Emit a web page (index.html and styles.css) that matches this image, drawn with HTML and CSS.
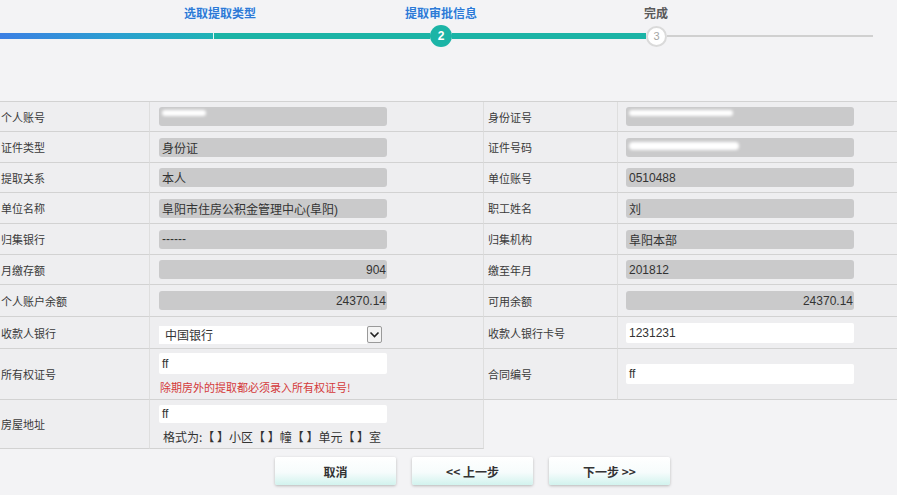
FILE: index.html
```html
<!DOCTYPE html>
<html lang="zh-CN">
<head>
<meta charset="utf-8">
<title>提取审批信息</title>
<link rel="stylesheet" href="styles.css">
</head>
<body>
<div class="stepper">
  <div class="step-labels">
    <span class="sl sl1">选取提取类型</span>
    <span class="sl sl2">提取审批信息</span>
    <span class="sl sl3">完成</span>
  </div>
  <div class="track">
    <span class="seg seg1"></span><span class="tick"></span><span class="seg seg2"></span>
    <span class="node node-on">2</span>
    <span class="seg seg3"></span>
    <span class="node node-off">3</span>
    <span class="seg seg4"></span>
  </div>
</div>

<div class="form">
  <div class="cell lbl">个人账号</div>
  <div class="cell val"><div class="field ro"><span class="smudge sm1"></span></div></div>
  <div class="cell lbl lbl-r">身份证号</div>
  <div class="cell val val-r"><div class="field ro"><span class="smudge sm2"></span></div></div>

  <div class="cell lbl">证件类型</div>
  <div class="cell val"><div class="field ro">身份证</div></div>
  <div class="cell lbl lbl-r">证件号码</div>
  <div class="cell val val-r"><div class="field ro"><span class="smudge sm3"></span></div></div>

  <div class="cell lbl">提取关系</div>
  <div class="cell val"><div class="field ro">本人</div></div>
  <div class="cell lbl lbl-r">单位账号</div>
  <div class="cell val val-r"><div class="field ro">0510488</div></div>

  <div class="cell lbl">单位名称</div>
  <div class="cell val"><div class="field ro">阜阳市住房公积金管理中心(阜阳)</div></div>
  <div class="cell lbl lbl-r">职工姓名</div>
  <div class="cell val val-r"><div class="field ro">刘</div></div>

  <div class="cell lbl">归集银行</div>
  <div class="cell val"><div class="field ro">------</div></div>
  <div class="cell lbl lbl-r">归集机构</div>
  <div class="cell val val-r"><div class="field ro">阜阳本部</div></div>

  <div class="cell lbl">月缴存额</div>
  <div class="cell val"><div class="field ro num">904</div></div>
  <div class="cell lbl lbl-r">缴至年月</div>
  <div class="cell val val-r"><div class="field ro">201812</div></div>

  <div class="cell lbl">个人账户余额</div>
  <div class="cell val"><div class="field ro num">24370.14</div></div>
  <div class="cell lbl lbl-r">可用余额</div>
  <div class="cell val val-r"><div class="field ro num">24370.14</div></div>

  <div class="cell lbl">收款人银行</div>
  <div class="cell val">
    <div class="select">
      <span class="sel-box">中国银行</span>
      <span class="sel-btn"><svg width="13" height="15" viewBox="0 0 13 15"><path d="M2.5 5.5 L6.5 9.5 L10.5 5.5" fill="none" stroke="#222" stroke-width="1.6"/></svg></span>
    </div>
  </div>
  <div class="cell lbl lbl-r">收款人银行卡号</div>
  <div class="cell val val-r"><div class="field wh tall">1231231</div></div>

  <div class="cell lbl">所有权证号</div>
  <div class="cell val stack stack9">
    <div class="field wh h21">ff</div>
    <div class="hint-red">除期房外的提取都必须录入所有权证号!</div>
  </div>
  <div class="cell lbl lbl-r">合同编号</div>
  <div class="cell val val-r"><div class="field wh tall">ff</div></div>

  <div class="cell lbl">房屋地址</div>
  <div class="cell val stack stack10">
    <div class="field wh">ff</div>
    <div class="hint">格式为:【 】小区【 】幢【 】单元【 】室</div>
  </div>
  <div class="blank"></div>
</div>

<div class="buttons">
  <button class="btn">取消</button>
  <button class="btn">&lt;&lt; 上一步</button>
  <button class="btn">下一步 &gt;&gt;</button>
</div>
</body>
</html>
```

FILE: styles.css
```css
html, body {
  margin: 0;
  padding: 0;
}
body {
  background: #f3f3f5;
  font-family: "Liberation Sans", "Noto Sans CJK SC", sans-serif;
  color: #333;
  overflow: hidden;
  width: 897px;
  height: 495px;
}

/* stepper */
.stepper {
  height: 47px;
}
.step-labels {
  display: flex;
  height: 25px;
  align-items: center;
}
.sl {
  width: 100px;
  flex: none;
  text-align: center;
  font-size: 12px;
  font-weight: bold;
  line-height: 14px;
  font-family: "Noto Sans CJK SC", sans-serif;
}
.sl1 { margin-left: 170px; color: #2d7ad6; text-shadow: 0 0 3px #fff, 0 0 2px #d8ecff; }
.sl2 { margin-left: 121px; color: #2d7ad6; text-shadow: 0 0 3px #fff, 0 0 2px #d8ecff; }
.sl3 { margin-left: 115px; color: #5a5a5a; }

.track {
  display: flex;
  align-items: center;
  height: 22px;
}
.seg {
  flex: none;
  height: 6px;
}
.seg1 {
  width: 213px;
  background: linear-gradient(to right, #3b7fe4, #2a9fd0 55%, #1fb3b5);
  border-radius: 0 0 0 0;
}
.tick {
  flex: none;
  width: 1px;
  height: 6px;
  background: #e6f6f4;
}
.seg2 { width: 216px; background: #1bb4a6; }
.seg3 { width: 194px; background: #1bb4a6; }
.seg4 { width: 206px; height: 2px; background: #d0d0d0; }
.node {
  flex: none;
  box-sizing: border-box;
  border-radius: 50%;
  display: flex;
  align-items: center;
  justify-content: center;
  font-size: 12px;
}
.node-on {
  width: 22px;
  height: 22px;
  background: #1bb4a6;
  color: #fff;
  font-weight: bold;
}
.node-off {
  width: 21px;
  height: 21px;
  background: #fff;
  border: 2px solid #dadada;
  color: #a5a5a5;
  font-size: 11px;
}

/* form grid */
.form {
  margin-top: 54px;
  display: grid;
  grid-template-columns: 150px 334px 134px 279px;
  grid-template-rows: 30px 31px 30px 31px 31px 30px 32px 32px 51px 49px;
  border-top: 1px solid #d2d2d2;
  width: 897px;
}
.cell {
  box-sizing: border-box;
  background: #eeeef0;
  border-right: 1px solid #dedede;
  border-bottom: 1px solid #d2d2d2;
  display: flex;
  align-items: center;
  min-width: 0;
}
.cell:nth-child(4n) {
  border-right: none;
}
.lbl {
  padding-left: 1px;
  font-size: 11px;
  color: #3a3a3a;
  font-family: "Noto Sans CJK SC", sans-serif;
  white-space: nowrap;
}
.lbl-r {
  padding-left: 4px;
}
.val {
  padding-left: 9px;
}
.val-r {
  padding-left: 8px;
}
.field {
  box-sizing: border-box;
  width: 228px;
  height: 19px;
  border-radius: 3px;
  padding: 0 3px;
  display: flex;
  align-items: center;
  font-size: 12px;
  color: #333;
  white-space: nowrap;
  overflow: hidden;
  flex: none;
}
.ro {
  background: #cacacb;
}
.wh {
  background: #fff;
  height: 18px;
  border-radius: 2px;
}
.wh.tall { height: 20px; }
.wh.h21 { height: 21px; }
.num {
  justify-content: flex-end;
  padding-right: 1px;
}
.smudge {
  display: block;
  height: 6px;
  background: #fff;
  border-radius: 4px;
  filter: blur(1.5px);
  margin-top: -8px;
}
.sm1 { width: 44px; }
.sm2 { width: 104px; }
.sm3 { width: 110px; margin-top: -2px; height: 8px; }

.select {
  display: flex;
  align-items: center;
  margin-top: 4px;
}
.sel-box {
  box-sizing: border-box;
  width: 208px;
  height: 18px;
  background: #fff;
  padding-left: 6px;
  font-size: 12px;
  line-height: 18px;
  font-family: "Noto Sans CJK SC", sans-serif;
}
.sel-btn {
  box-sizing: border-box;
  width: 15px;
  height: 17px;
  border: 1px solid #9a9a9a;
  border-radius: 2px;
  background: #f4f4f4;
  display: flex;
  align-items: center;
  justify-content: center;
}
.sel-btn svg { display: block; }

.stack {
  flex-direction: column;
  align-items: flex-start;
  justify-content: flex-start;
}
.stack9 { padding-top: 4px; }
.stack10 { padding-top: 5px; }
.hint-red {
  margin-top: 6px;
  padding-left: 1px;
  font-size: 11px;
  line-height: 14px;
  color: #d43a3a;
  font-family: "Noto Sans CJK SC", sans-serif;
}
.hint {
  margin-top: 7px;
  padding-left: 4px;
  font-size: 12px;
  line-height: 14px;
  color: #333;
  font-family: "Noto Sans CJK SC", sans-serif;
}
.blank {
  grid-column: span 2;
}

/* buttons */
.buttons {
  display: flex;
  gap: 16px;
  padding-left: 275px;
  margin-top: 8px;
}
.btn {
  width: 121px;
  height: 28px;
  border: none;
  border-radius: 2px;
  background: linear-gradient(to bottom, #ffffff 0%, #f6fcfc 55%, #d2f3ee 100%);
  box-shadow: 0 1px 3px rgba(0, 0, 0, 0.25);
  font-family: "Noto Sans CJK SC", sans-serif;
  font-size: 12px;
  font-weight: bold;
  color: #333;
  padding: 0;
}
```
